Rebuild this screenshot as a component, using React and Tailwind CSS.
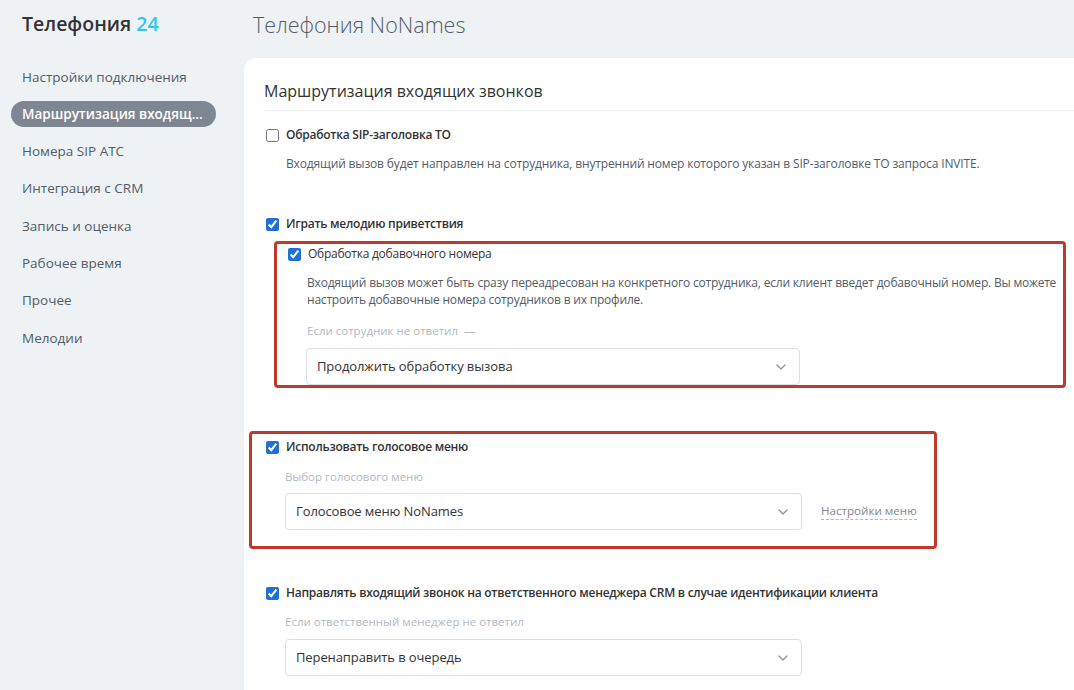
import { ChevronDown } from "lucide-react";

const NAV = [
  "Настройки подключения",
  "Маршрутизация входящ...",
  "Номера SIP АТС",
  "Интеграция с CRM",
  "Запись и оценка",
  "Рабочее время",
  "Прочее",
  "Мелодии",
];

function Check({ checked }) {
  return (
    <input
      type="checkbox"
      defaultChecked={checked}
      className="w-[13px] h-[13px] m-0 shrink-0 accent-[#1f6fd6]"
    />
  );
}

function CheckRow({ checked, label, bold = true }) {
  return (
    <label className="flex items-center gap-[7px] h-[20px]">
      <Check checked={checked} />
      <span className={`text-[12px] tracking-[-0.25px] text-[#333] ${bold ? "font-semibold" : ""}`}>{label}</span>
    </label>
  );
}

function Select({ value, width }) {
  return (
    <div
      className={`flex items-center justify-between h-[37px] pl-[10px] pr-[10px] border border-[#dcdfe3] rounded-[4px] bg-white ${width}`}
    >
      <span className="text-[13px] tracking-[-0.1px] text-[#333]">{value}</span>
      <ChevronDown className="w-[16px] h-[16px] text-[#8c939b]" strokeWidth={2} />
    </div>
  );
}

export default function App() {
  return (
    <div
      className="flex w-[1074px] h-[690px] overflow-hidden bg-[#eef2f4]"
      style={{ fontFamily: '"Open Sans", "Noto Sans", sans-serif' }}
    >
      {/* Sidebar */}
      <div className="w-[244px] shrink-0">
        <div className="pt-[10px] pl-[22px] h-[58px] text-[19.5px] leading-[28px] font-semibold text-[#333]">
          Телефония <span className="text-[#2fc6f6]">24</span>
        </div>
        <div className="pl-[11px] w-[216px]">
          {NAV.map((item, i) => (
            <div key={item} className="h-[37.3px] flex items-center">
              {i === 1 ? (
                <div className="w-full h-[26px] rounded-full bg-[#7e8691] flex items-center pl-[11px] text-[13.5px] font-semibold text-white">
                  {item}
                </div>
              ) : (
                <span className="pl-[11px] text-[13.5px] text-[#525c69]">{item}</span>
              )}
            </div>
          ))}
        </div>
      </div>

      {/* Main */}
      <div className="flex-1 flex flex-col min-w-0">
        <div className="h-[58px] pt-[10px] pl-[9px] text-[21.5px] leading-[30px] font-light text-[#525c69]">
          Телефония NoNames
        </div>
        <div className="flex-1 bg-white rounded-tl-[12px] pl-[20px]">
          <div className="pt-[21px] pb-[7px] border-b border-[#eef2f4] text-[16px] leading-[24px] text-[#333]">
            Маршрутизация входящих звонков
          </div>

          <div className="pl-[2px]">
            <div className="mt-[14px]">
              <CheckRow checked={false} label="Обработка SIP-заголовка TO" />
            </div>
            <p className="mt-[10px] ml-[20px] text-[12px] tracking-[-0.15px] leading-[18px] text-[#525c69] whitespace-nowrap">
              Входящий вызов будет направлен на сотрудника, внутренний номер которого указан в SIP-заголовке TO запроса INVITE.
            </p>

            <div className="mt-[41px]">
              <CheckRow checked label="Играть мелодию приветствия" />
            </div>
          </div>

          {/* Highlight 1 */}
          <div className="mt-[7px] ml-[10px] mr-[8px] border-[3px] border-[#c0392b] rounded-[4px] pl-[11px]">
            <CheckRow checked bold={false} label="Обработка добавочного номера" />
            <p className="mt-[10px] ml-[19px] text-[12px] tracking-[-0.2px] leading-[17px] text-[#525c69] whitespace-nowrap">
              Входящий вызов может быть сразу переадресован на конкретного сотрудника, если клиент введет добавочный номер. Вы можете
              <br />
              настроить добавочные номера сотрудников в их профиле.
            </p>
            <div className="mt-[14px] ml-[19px] text-[11.5px] leading-[18px] text-[#b4b9bf]">
              Если сотрудник не ответил&nbsp;&nbsp;—
            </div>
            <div className="mt-[8px] ml-[18px]">
              <Select value="Продолжить обработку вызова" width="w-[494px]" />
            </div>
          </div>

          {/* Highlight 2 */}
          <div className="mt-[43px] -ml-[15px] w-[688px] border-[3px] border-[#c0392b] rounded-[4px] pl-[14px] pt-[3px] pb-[16px]">
            <CheckRow checked label="Использовать голосовое меню" />
            <div className="mt-[11px] ml-[19px] text-[11.5px] leading-[18px] text-[#b4b9bf]">
              Выбор голосового меню
            </div>
            <div className="mt-[7px] ml-[19px] flex items-center gap-[19px]">
              <Select value="Голосовое меню NoNames" width="w-[517px]" />
              <span className="text-[11.6px] text-[#80868e] border-b border-dashed border-[#b4b9bf] leading-[16px]">
                Настройки меню
              </span>
            </div>
          </div>

          <div className="pl-[2px]">
            <div className="mt-[34px]">
              <CheckRow checked label="Направлять входящий звонок на ответственного менеджера CRM в случае идентификации клиента" />
            </div>
            <div className="mt-[10px] ml-[19px] text-[11.5px] leading-[18px] text-[#b4b9bf]">
              Если ответственный менеджер не ответил
            </div>
            <div className="mt-[8px] ml-[19px]">
              <Select value="Перенаправить в очередь" width="w-[517px]" />
            </div>
          </div>
        </div>
      </div>
    </div>
  );
}
